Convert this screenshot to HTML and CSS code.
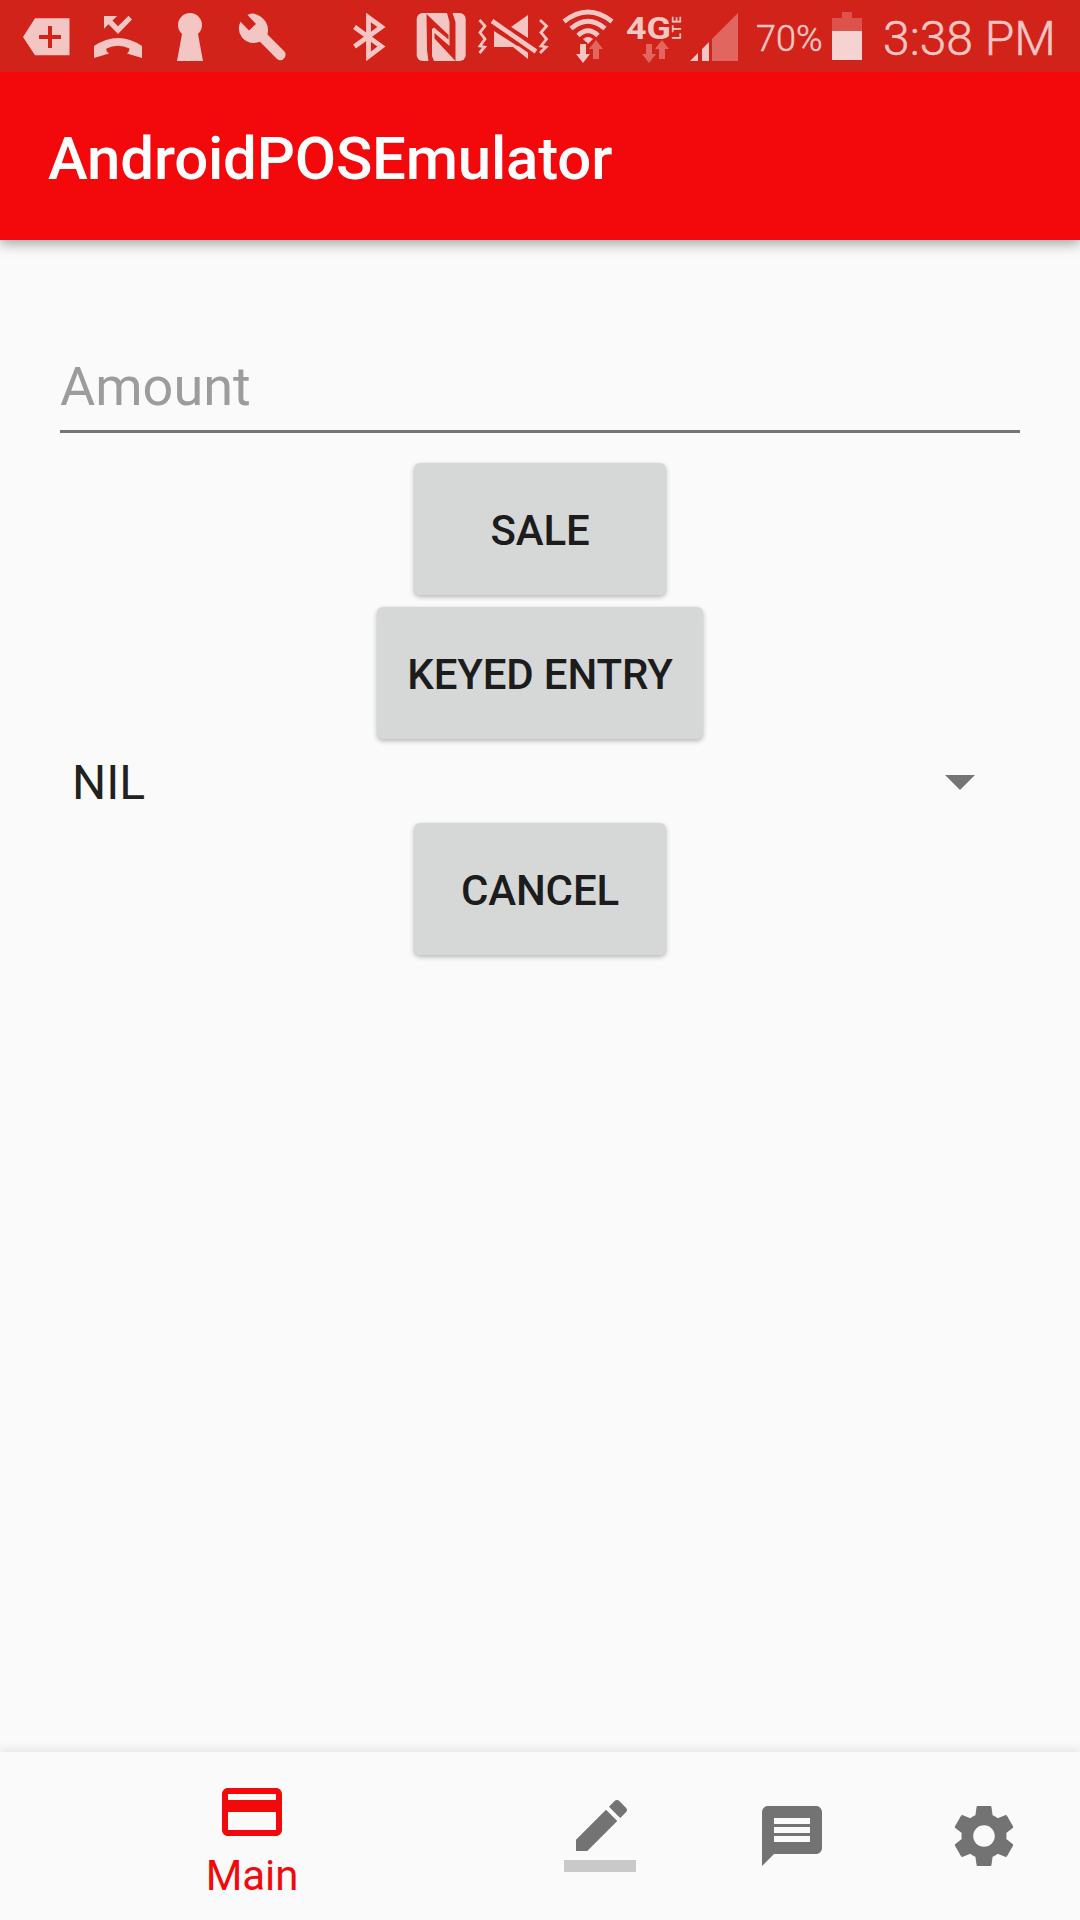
FILE: index.html
```html
<!DOCTYPE html>
<html lang="en">
<head>
<meta charset="utf-8">
<title>AndroidPOSEmulator</title>
<link rel="stylesheet" href="styles.css">
</head>
<body>
<div class="screen">
  <div class="status-bar">
    <svg width="82" height="72" viewBox="0 0 82 72"><path fill-rule="evenodd" d="M23 37L35 18.3H69.5V55.3H35ZM48 26V35H39V39H48V48H52V39H61V35H52V26Z"/></svg>
    <svg width="78" height="72" viewBox="82 0 78 72"><path d="M104 16H117L112.500 20.500L118 26.300L128.500 15.700L132 19.500L118 34L108.500 24.200L104 28.700ZM94 46Q118 30 142 46V58L127 53.500Q130 51 129.500 48.500Q118 43 106.500 48.500Q105.500 51 109 53.500L94 58Z"/></svg>
    <svg width="60" height="72" viewBox="160 0 60 72"><path d="M182 34A12 12 0 1 1 198 34L203 61H177Z"/></svg>
    <svg width="80" height="72" viewBox="220 0 80 72"><path d="M247.500 15Q254 11.500 260.500 16.500Q270 23 267.500 34.500L284.500 51.500Q286.500 54 284.800 57.500Q281.500 62 277 59L260 41.800Q249 45.500 242 37.500Q236.500 30 240.500 21.800L249 30.500L256 24Z"/></svg>
    <svg width="100" height="72" viewBox="300 0 100 72"><path class="line" stroke-width="4.800" d="M354.500 27L381.500 46.500L368.500 56.500V17.500L381.500 27L354.500 46.500"/></svg>
    <svg width="70" height="72" viewBox="400 0 70 72"><rect x="416.700" y="13" width="49" height="48" rx="6"/><path class="halo" d="M426.500 14L448.500 35V39.500L434 27.500L432 29V56L434 61H428.500L427 50ZM434.500 33L449.500 46V22L447 13H452.500L455.500 22V61L434.500 38.500Z"/></svg>
    <svg width="90" height="72" viewBox="470 0 90 72"><path d="M494 31L519 47H494ZM511 27L528 15V38ZM513 47L528 44V59Z"/><path class="cut" stroke-width="11" d="M493 21.500L536 51.500"/><path class="line" stroke-width="4.600" d="M492 21L536 51.500"/><path class="line" stroke-width="2.800" d="M479.500 20L485 26L480 32.500L485 39L480 46L484.500 47L479.500 53M540 20L546.500 26L541 32.500L546.500 39L541 46L546 47L540 53"/></svg>
    <svg width="62" height="72" viewBox="560 0 62 72"><path class="line" stroke-width="4.800" d="M564 21.500Q588 2.500 612 21.500M571 28.500Q588 14 605 28.500M578 35.500Q588 26 598 35.500"/><path d="M583 39Q588 35 593 39L588 44Z"/><path class="halo" d="M579 42H587V54H591L583 63L575 54H579Z"/><path d="M580 44H586V54H590L583 63L576 54H580Z"/><path class="faint" d="M593 59H599V49H603L596 40L589 49H593Z"/></svg>
    <svg width="63" height="72" viewBox="622 0 63 72"><text class="net" x="626" y="39" textLength="45" lengthAdjust="spacingAndGlyphs">4G</text><text class="lte" transform="translate(681 39.500) rotate(-90)" textLength="23">LTE</text><path class="faint" d="M646 44H652V54H656L649 63L642 54H646ZM659 59H665V49H669L662 40L655 49H659Z"/></svg>
    <svg width="71" height="72" viewBox="685 0 71 72"><path d="M690 61L698 53V61ZM702 61V49L709 42V61Z"/><path class="faint" d="M712 61V39L738 13V61Z"/></svg>
    <span class="percent">70%</span>
    <svg width="60" height="72" viewBox="822 0 60 72"><path class="spent" d="M832 31V18H842V12H852V18H862V31Z"/><path class="charge" d="M832 31H862V60H832Z"/></svg>
    <span class="clock">3:38 PM</span>
  </div>
  <header class="app-bar"><h1>AndroidPOSEmulator</h1></header>
  <main>
    <input class="amount" placeholder="Amount">
    <div class="actions">
      <button>SALE</button>
      <button>KEYED ENTRY</button>
      <div class="spinner"><span>NIL</span><svg width="30" height="15" viewBox="0 0 30 15"><path d="M0 0H30L15 15Z"/></svg></div>
      <button>CANCEL</button>
    </div>
  </main>
  <nav>
    <a class="tab active"><svg viewBox="0 0 24 24"><path d="M20 4H4c-1.110 0-1.990.89-1.990 2L2 18c0 1.110.89 2 2 2h16c1.110 0 2-.89 2-2V6c0-1.110-.89-2-2-2zm0 14H4v-6h16v6zm0-10H4V6h16v2z"/></svg><span>Main</span></a>
    <a class="tab"><svg viewBox="0 0 24 24"><path d="M17.750 7L14 3.250l-10 10V17h3.750l10-10zm2.960-2.960c.39-.39.39-1.020 0-1.410L18.370.29c-.39-.39-1.020-.39-1.410 0L15 2.250 18.750 6l1.960-1.960z"/><path class="swatch" d="M0 20h24v4H0z"/></svg></a>
    <a class="tab"><svg viewBox="0 0 24 24"><path d="M20 2H4c-1.100 0-1.990.9-1.990 2L2 22l4-4h14c1.100 0 2-.9 2-2V4c0-1.100-.9-2-2-2zm-2 12H6v-2h12v2zm0-3H6V9h12v2zm0-3H6V6h12v2z"/></svg></a>
    <a class="tab"><svg viewBox="0 0 24 24"><path d="M19.430 12.980c.04-.32.07-.64.07-.98s-.03-.66-.07-.98l2.110-1.650c.19-.15.24-.42.12-.64l-2-3.460c-.12-.22-.39-.3-.61-.22l-2.490 1c-.52-.4-1.080-.73-1.690-.98l-.38-2.650C14.460 2.180 14.250 2 14 2h-4c-.25 0-.46.18-.49.42l-.38 2.650c-.61.25-1.170.59-1.690.98l-2.490-1c-.23-.09-.49 0-.61.22l-2 3.460c-.13.22-.07.49.12.64l2.110 1.650c-.04.32-.07.65-.07.98s.03.66.07.98l-2.110 1.650c-.19.15-.24.42-.12.64l2 3.460c.12.22.39.3.61.22l2.490-1c.52.4 1.080.73 1.690.98l.38 2.650c.03.24.24.42.49.42h4c.25 0 .46-.18.49-.42l.38-2.650c.61-.25 1.170-.59 1.690-.98l2.490 1c.23.09.49 0 .61-.22l2-3.460c.12-.22.07-.49-.12-.64l-2.110-1.650zM12 15.600c-1.980 0-3.600-1.620-3.600-3.600s1.620-3.600 3.600-3.600 3.600 1.620 3.600 3.600-1.620 3.600-3.600 3.600z"/></svg></a>
  </nav>
</div>
</body>
</html>
```
FILE: styles.css
```css
* { box-sizing: border-box; }
body { margin: 0; font-family: Roboto, sans-serif; background: #fafafa; }
.screen { width: 1080px; height: 1920px; display: flex; flex-direction: column; overflow: hidden; }
svg { display: block; flex: none; }

.status-bar { position: relative; z-index: 1; height: 72px; display: flex; background: #d1231a; color: #f4c6c3; fill: #f4c6c3; flex: none; }
.status-bar span { line-height: 72px; white-space: nowrap; -webkit-text-stroke: .5px #f4c6c3; }
.line { fill: none; stroke: #f4c6c3; }
.cut { fill: none; stroke: #d1231a; }
.halo { fill: #d1231a; }
.faint { fill: #e1665f; }
.spent { fill: #dd524b; }
.charge { fill: #f6d3d1; }
.net { font: 700 31px Roboto, sans-serif; }
.lte { font: 700 12px Roboto, sans-serif; }
.percent { width: 66px; font-size: 36px; font-weight: 300; padding-top: 3px; }
.clock { font-size: 48px; font-weight: 300; padding: 3px 0 0 1px; }

.app-bar { height: 168px; flex: none; padding-left: 48px; background: #f3080b; color: #fff; box-shadow: 0 4px 12px rgba(0, 0, 0, .34); }
h1 { margin: 0; font-size: 60px; font-weight: 500; line-height: 174px; letter-spacing: -.2px; }

main { flex: 1; padding: 102px 48px 0; }
.amount { display: block; width: 960px; height: 91px; margin: 0 12px; padding: 0; border: 0; border-bottom: 3px solid #757575; background: none; font: 54px Roboto, sans-serif; color: #1c1c1c; outline: 0; }
.amount::placeholder { color: #9c9c9c; opacity: 1; }
.actions { display: flex; flex-direction: column; align-items: center; padding-top: 30px; gap: 12px; }
button { min-width: 252px; height: 132px; padding: 2px 30px 0; border: 0; border-radius: 6px; background: #d6d8d7; color: #1c1c1c; font: 500 42px Roboto, sans-serif; letter-spacing: -.15px; box-shadow: 0 2px 5px rgba(0, 0, 0, .28); }
.spinner { width: 100%; height: 60px; display: flex; align-items: center; justify-content: space-between; padding: 2px 57px 0 24px; font-size: 48px; color: #212121; }
.spinner svg { fill: #757575; }

nav { height: 168px; flex: none; display: grid; grid-template-columns: 504px 192px 192px 192px; background: #fafafa; fill: #737373; box-shadow: 0 -2px 10px rgba(0, 0, 0, .1); }
.tab { display: flex; flex-direction: column; align-items: center; padding-top: 48px; }
.tab svg { width: 72px; height: 72px; }
.active { padding-top: 24px; color: #f3080b; fill: #f3080b; font-size: 42px; }
.active span { line-height: 50px; margin-top: 3px; letter-spacing: -.1px; }
.swatch { fill-opacity: .36; }
```
